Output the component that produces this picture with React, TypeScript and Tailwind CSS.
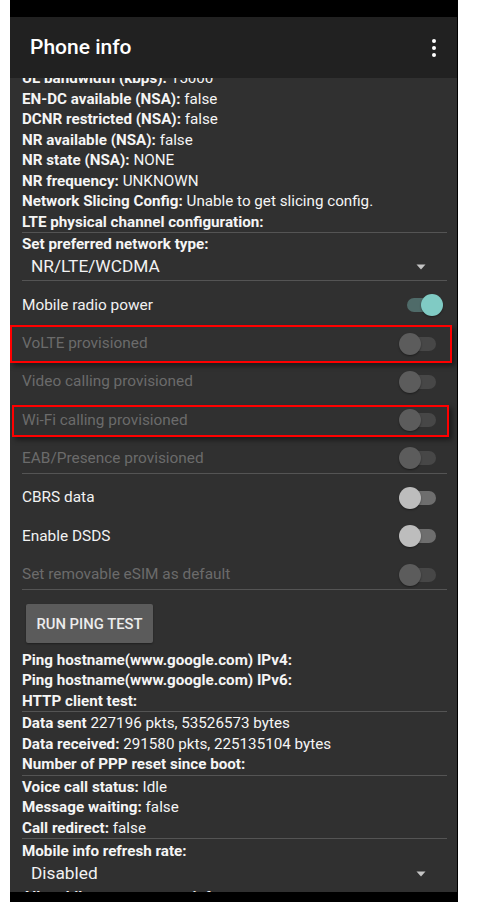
import React from "react";

type SwitchState = "on" | "off" | "disabled";

function Toggle({ state }: { state: SwitchState }) {
  const track =
    state === "on" ? "bg-[#4f6b69]" : state === "off" ? "bg-[#6e6e6e]" : "bg-[#474747]";
  const thumb =
    state === "on" ? "bg-[#80cbc4] left-[22px]" : state === "off" ? "bg-[#bdbdbd] left-0" : "bg-[#5c5c5c] left-0";
  return (
    <div className="relative w-[44px] h-[22px] shrink-0">
      <div className={`absolute left-[8px] right-[7px] top-[4px] h-[14px] rounded-full ${track}`} />
      <div className={`absolute top-0 w-[22px] h-[22px] rounded-full shadow-[0_1px_2px_rgba(0,0,0,0.4)] ${thumb}`} />
    </div>
  );
}

function Line({ label, value }: { label: string; value?: string }) {
  return (
    <div className="h-[20.5px] leading-[20.5px] text-[15.2px] text-[#f5f5f5] whitespace-nowrap">
      <span className="font-bold">{label}</span>
      {value !== undefined && <span> {value}</span>}
    </div>
  );
}

function Divider({ h = "h-[1px]" }: { h?: string }) {
  return (
    <div className={`${h} shrink-0`}>
      <div className="h-[1px] bg-[#545454]" />
    </div>
  );
}

function Arrow() {
  return (
    <svg width="10" height="6" viewBox="0 0 10 6" className="shrink-0">
      <path d="M0.5 0.5 L9.5 0.5 L5 5.5 Z" fill="#c4c4c4" />
    </svg>
  );
}

function Spinner({ text, h }: { text: string; h: string }) {
  return (
    <div className={`${h} flex items-center justify-between pl-[9px] pr-[21px]`}>
      <span className="text-[17.3px] text-[#f2f2f2]">{text}</span>
      <Arrow />
    </div>
  );
}

function SwitchRow({
  label,
  state,
  box,
}: {
  label: string;
  state: SwitchState;
  box?: "volte" | "wifi";
}) {
  const disabled = state === "disabled";
  return (
    <div className="relative h-[28.6px] flex items-center justify-between pr-[4px]">
      <span className={`text-[15.4px] ${disabled ? "text-[#6b6b6b]" : "text-[#f2f2f2]"}`}>{label}</span>
      <Toggle state={state} />
      {box === "volte" && (
        <div className="absolute top-[-4.7px] bottom-[-4.7px] left-[-12px] right-[-5px] border-2 border-[#ff0000] shadow-[3px_3px_5px_rgba(0,0,0,0.45)]" />
      )}
      {box === "wifi" && (
        <div className="absolute top-[-0.5px] bottom-[-3px] left-[-10px] right-[-2px] border-2 border-[#ff0000] shadow-[3px_3px_5px_rgba(0,0,0,0.45)]" />
      )}
    </div>
  );
}

export default function App() {
  return (
    <div
      className="min-h-[902px] bg-white flex"
      style={{ fontFamily: 'Roboto, "Noto Sans", "Liberation Sans", sans-serif' }}
    >
      <div className="ml-[10px] w-[448px] h-[902px] flex flex-col bg-[#303030] border-r border-black overflow-hidden">
        <div className="h-[17px] bg-black shrink-0" />
        <header className="relative z-10 h-[61px] shrink-0 bg-[#212121] flex items-center justify-between pl-[20px] pr-[20px]">
          <span className="text-[21px] font-medium text-white">Phone info</span>
          <svg width="4" height="18" viewBox="0 0 4 18" className="mr-[1px]">
            <circle cx="2" cy="2" r="2" fill="#fff" />
            <circle cx="2" cy="9" r="2" fill="#fff" />
            <circle cx="2" cy="16" r="2" fill="#fff" />
          </svg>
        </header>
        <main className="flex-1 overflow-hidden">
          <div className="mt-[-10px] pl-[12px] pr-[10px] flex flex-col">
            <Line label="UL bandwidth (kbps):" value="15000" />
            <Line label="EN-DC available (NSA):" value="false" />
            <Line label="DCNR restricted (NSA):" value="false" />
            <Line label="NR available (NSA):" value="false" />
            <Line label="NR state (NSA):" value="NONE" />
            <Line label="NR frequency:" value="UNKNOWN" />
            <Line label="Network Slicing Config:" value="Unable to get slicing config." />
            <Line label="LTE physical channel configuration:" />
            <Divider h="h-[2px]" />
            <Line label="Set preferred network type:" />
            <Spinner text="NR/LTE/WCDMA" h="h-[25.5px]" />
            <Divider />
            <div className="pt-[10px] flex flex-col gap-[9.7px]">
              <SwitchRow label="Mobile radio power" state="on" />
              <SwitchRow label="VoLTE provisioned" state="disabled" box="volte" />
              <SwitchRow label="Video calling provisioned" state="disabled" />
              <SwitchRow label="Wi-Fi calling provisioned" state="disabled" box="wifi" />
              <SwitchRow label="EAB/Presence provisioned" state="disabled" />
            </div>
            <Divider />
            <div className="pt-[10px] flex flex-col gap-[9.7px]">
              <SwitchRow label="CBRS data" state="off" />
              <SwitchRow label="Enable DSDS" state="off" />
              <SwitchRow label="Set removable eSIM as default" state="disabled" />
            </div>
            <Divider />
            <div className="mt-[14.5px] ml-[4px]">
              <button className="w-[127px] h-[39px] rounded-[2px] bg-[#5b5b5b] text-[14.8px] font-medium text-[#ececec] shadow-[0_1px_2px_rgba(0,0,0,0.35)]">
                RUN PING TEST
              </button>
            </div>
            <div className="mt-[6.5px] flex flex-col">
              <Line label="Ping hostname(www.google.com) IPv4:" />
              <Line label="Ping hostname(www.google.com) IPv6:" />
              <Line label="HTTP client test:" />
              <Divider h="h-[2px]" />
              <Line label="Data sent" value="227196 pkts, 53526573 bytes" />
              <Line label="Data received:" value="291580 pkts, 225135104 bytes" />
              <Line label="Number of PPP reset since boot:" />
              <Divider h="h-[2px]" />
              <Line label="Voice call status:" value="Idle" />
              <Line label="Message waiting:" value="false" />
              <Line label="Call redirect:" value="false" />
              <Divider h="h-[3px]" />
              <Line label="Mobile info refresh rate:" />
              <Spinner text="Disabled" h="h-[25px]" />
              <Line label="All mobile measurement info:" />
            </div>
          </div>
        </main>
        <div className="h-[10px] bg-black shrink-0" />
      </div>
    </div>
  );
}
